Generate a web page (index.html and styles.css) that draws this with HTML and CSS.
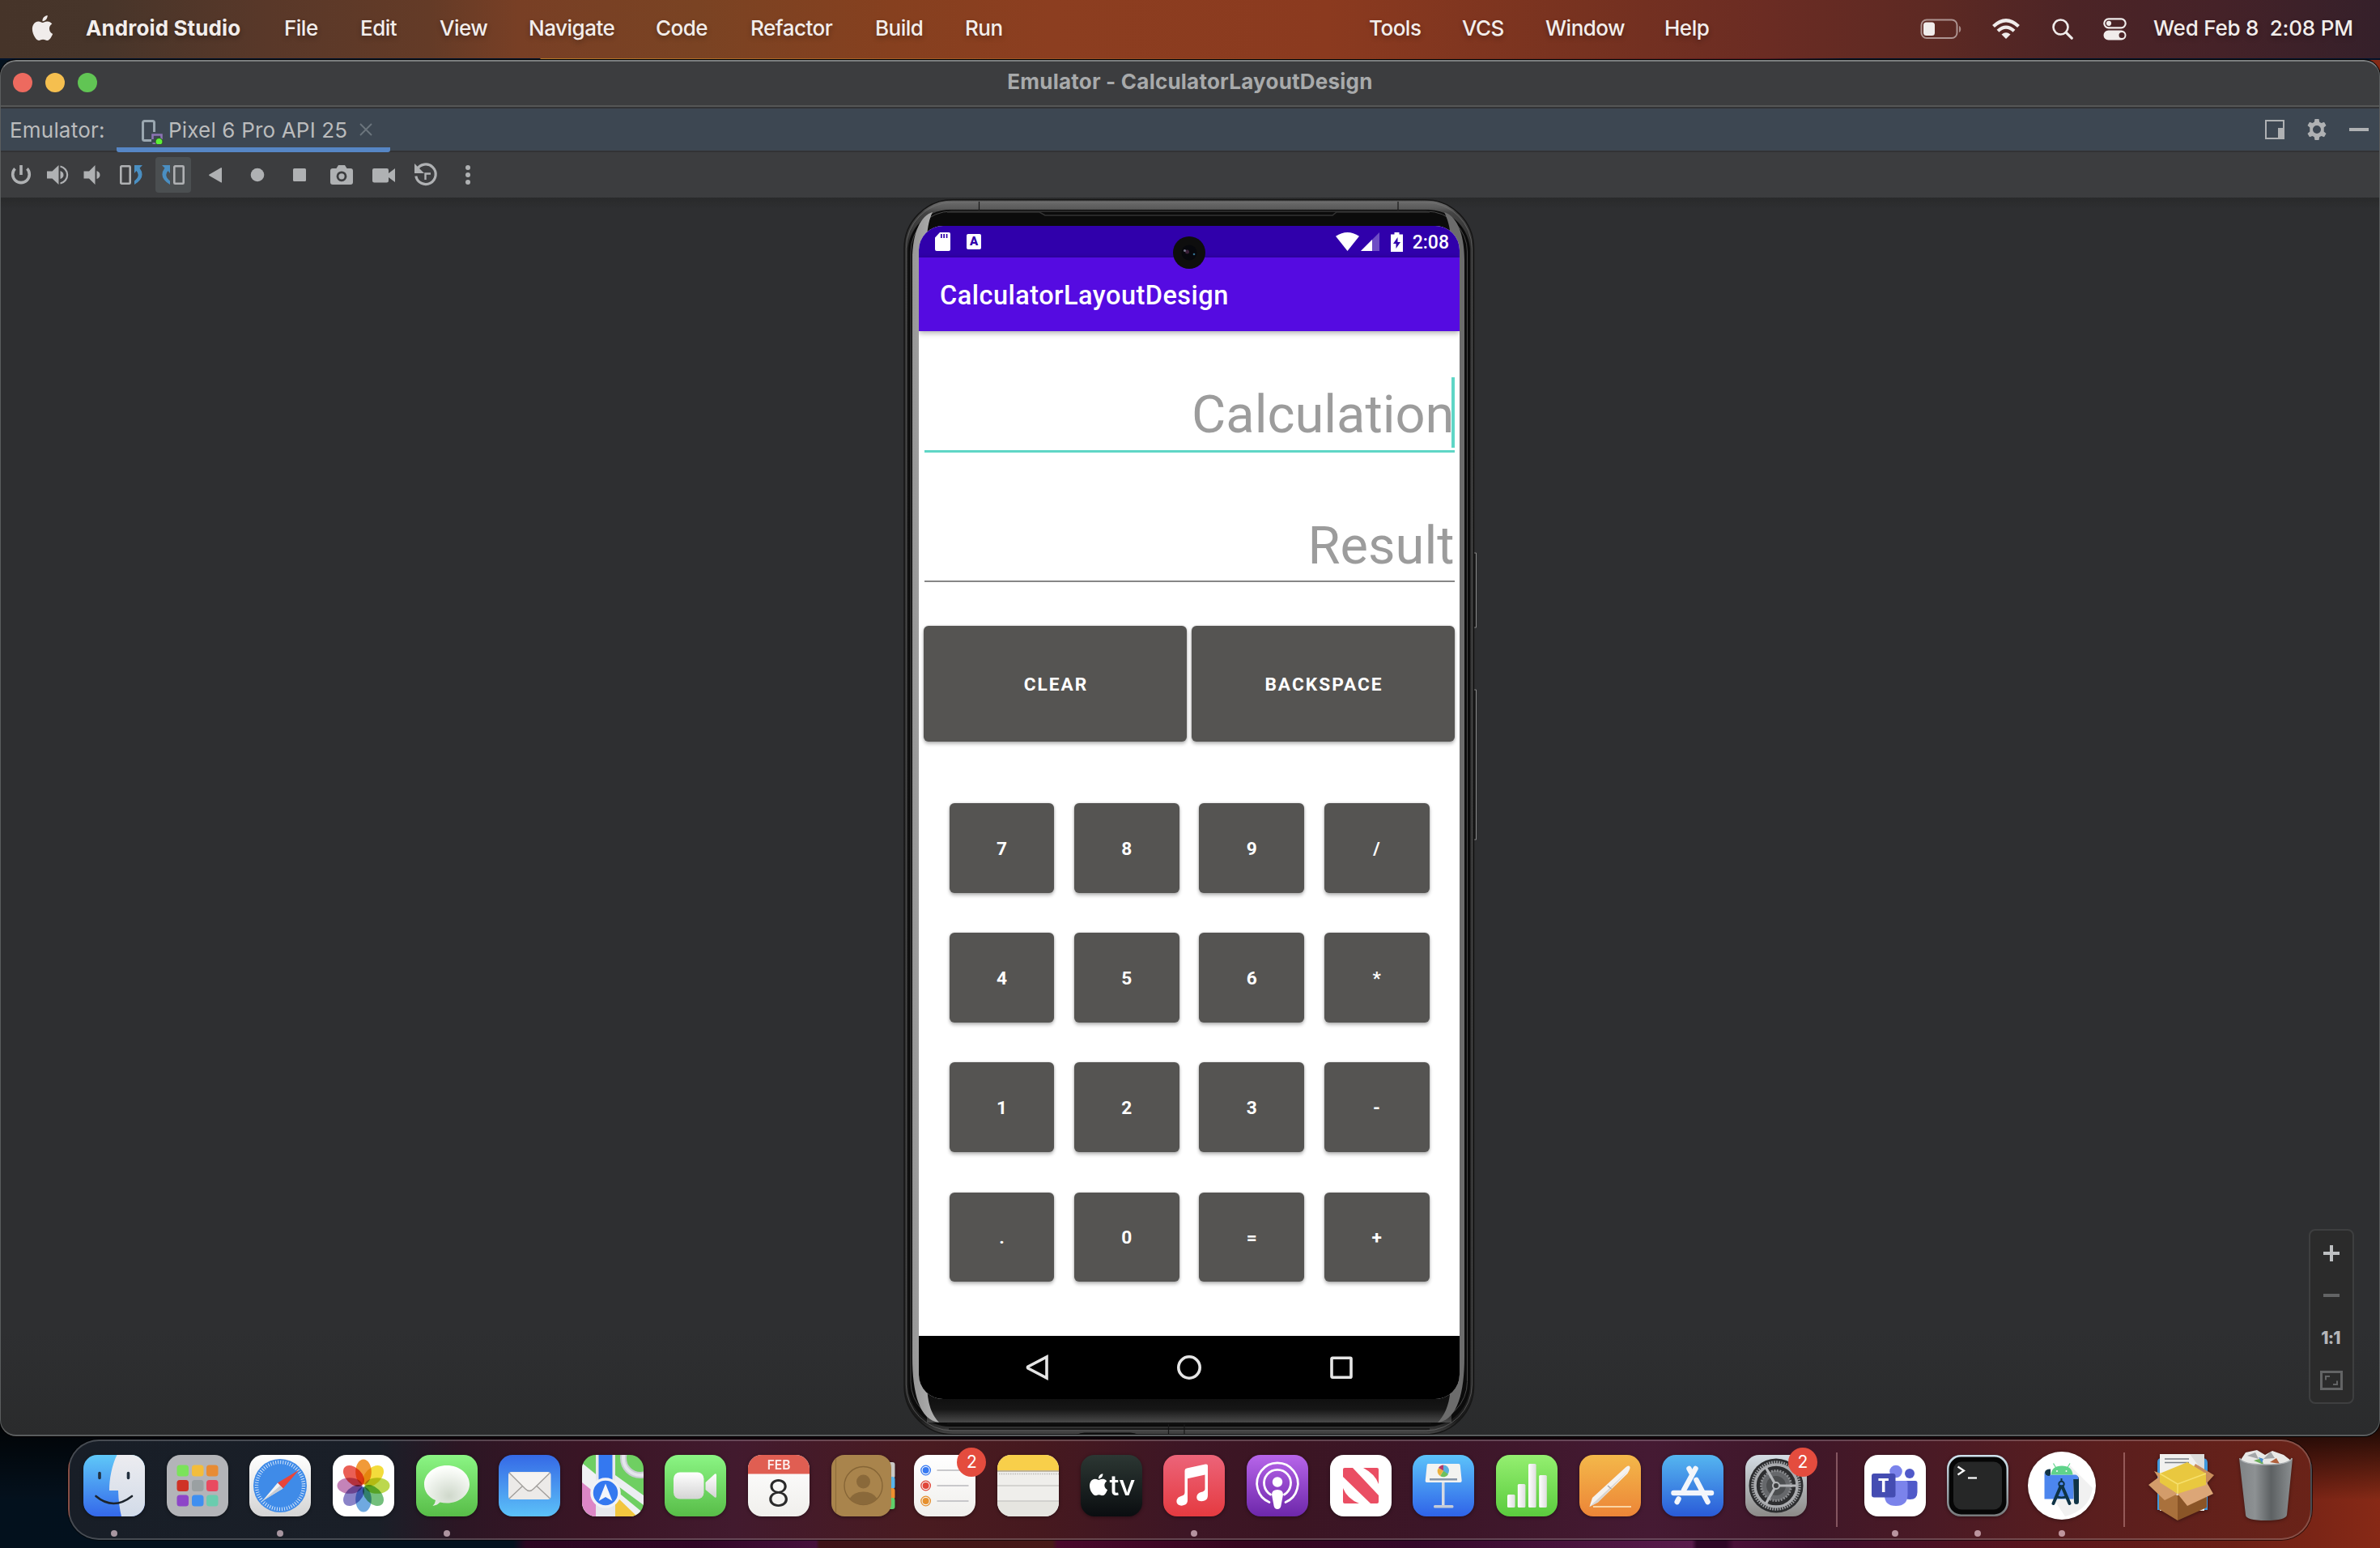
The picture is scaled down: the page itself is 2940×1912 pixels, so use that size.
FILE: index.html
```html
<!DOCTYPE html>
<html lang="en">
<head>
<meta charset="utf-8">
<title>Emulator - CalculatorLayoutDesign</title>
<link rel="stylesheet" href="styles.css">
</head>
<body>
<svg class="defs" width="0" height="0" aria-hidden="true">
  <defs>
    <linearGradient id="gGreen" x2="0" y2="1"><stop offset="0" stop-color="#8bf584"/><stop offset="1" stop-color="#58bd48"/></linearGradient>
    <linearGradient id="gBlue" x2="0" y2="1"><stop offset="0" stop-color="#3569e6"/><stop offset="1" stop-color="#5cc1f8"/></linearGradient>
    <linearGradient id="gBlueDown" x2="0" y2="1"><stop offset="0" stop-color="#5cc3fa"/><stop offset="1" stop-color="#2f63e8"/></linearGradient>
    <linearGradient id="gWhite" x2="0" y2="1"><stop offset="0" stop-color="#ffffff"/><stop offset="1" stop-color="#d4d4d4"/></linearGradient>
    <linearGradient id="gPaper" x2="0" y2="1"><stop offset="0" stop-color="#ffffff"/><stop offset="1" stop-color="#f0efec"/></linearGradient>
    <radialGradient id="gBubble" cx=".55" cy=".75" r=".7"><stop offset="0" stop-color="#cfd8cb"/><stop offset="1" stop-color="#fdfffc"/></radialGradient>
    <linearGradient id="gBar" x2="1"><stop offset="0" stop-color="#fff"/><stop offset="1" stop-color="#dedede"/></linearGradient>
    <clipPath id="tile"><rect width="76" height="76" rx="17"/></clipPath>
    <symbol id="apple" viewBox="0 0 24 24"><path d="M12.152 6.896c-.948 0-2.415-1.078-3.96-1.04-2.04.027-3.91 1.183-4.961 3.014-2.117 3.675-.546 9.103 1.519 12.09 1.013 1.454 2.208 3.09 3.792 3.039 1.52-.065 2.09-.987 3.935-.987 1.831 0 2.35.987 3.96.948 1.637-.026 2.676-1.48 3.676-2.948 1.156-1.688 1.636-3.325 1.662-3.415-.039-.013-3.182-1.221-3.22-4.857-.026-3.04 2.48-4.494 2.597-4.559-1.429-2.09-3.623-2.324-4.39-2.376-2-.156-3.675 1.09-4.61 1.09zM15.53 3.83c.843-1.012 1.4-2.427 1.245-3.83-1.207.052-2.662.805-3.532 1.818-.78.896-1.454 2.338-1.273 3.714 1.338.104 2.715-.688 3.559-1.701"/></symbol>
  </defs>
</svg>

<header class="menubar">
  <svg class="menubar-apple"><use href="#apple"/></svg>
  <strong class="menubar-app">Android Studio</strong>
  <nav class="menubar-menus">
    <span>File</span><span>Edit</span><span>View</span><span>Navigate</span><span>Code</span><span>Refactor</span><span>Build</span><span>Run</span><span>Tools</span><span>VCS</span><span>Window</span><span>Help</span>
  </nav>
  <div class="menubar-status">
    <svg class="s-battery" width="52" height="26" viewBox="0 0 52 26"><rect x="1.5" y="1.5" width="44" height="22.5" rx="6.5" fill="none" stroke="#fff" stroke-opacity=".5" stroke-width="2"/><rect x="4" y="4.500" width="14" height="16.500" rx="3.500"/><path d="M48 9c3 1 3 7 0 8z" fill-opacity=".5"/></svg>
    <svg class="s-wifi" width="34" height="26" viewBox="0 0 34 26"><g fill="none" stroke="#f0eceb" stroke-width="4.200"><path d="M1.500 9.500Q17-5 32.500 9.500"/><path d="M7 15.300Q17 6 27 15.300"/></g><path d="M17 25l-5.500-5.500q5.500-4.500 11 0z"/></svg>
    <svg class="s-search" width="26" height="26" viewBox="0 0 26 26"><g fill="none" stroke="#f0eceb" stroke-width="2.600" stroke-linecap="round"><circle cx="10.500" cy="10.500" r="9"/><path d="M17.200 17.200l7 7" stroke-width="3.200"/></g></svg>
    <svg class="s-control" width="29" height="28" viewBox="0 0 29 28"><rect x="1.300" y="1.300" width="26.400" height="11" rx="5.500" fill="none" stroke="#f0eceb" stroke-width="2.200"/><circle cx="7" cy="6.800" r="3.100"/><path fill-rule="evenodd" d="M6.500 15.500h16a6 6 0 010 12h-16a6 6 0 010-12zm16.500 2.500a3.500 3.500 0 100 7 3.500 3.500 0 000-7z"/></svg>
    <span class="clock">Wed Feb 8&nbsp; 2:08 PM</span>
  </div>
</header>

<main class="window">
  <div class="titlebar">
    <div class="lights"><i class="red"></i><i class="yellow"></i><i class="green"></i></div>
    <h1 class="title">Emulator - CalculatorLayoutDesign</h1>
  </div>
  <div class="tabbar">
    <span class="tabbar-label">Emulator:</span>
    <div class="tab">
      <svg width="28" height="32" viewBox="0 0 28 32"><path d="M12 27.500H3.500a2 2 0 01-2-2v-20a2 2 0 012-2h10a2 2 0 012 2V17" fill="none" stroke="#9aa7b0" stroke-width="3"/><path d="M13.500 26v-5.500h11V26M13.500 31.500h5" fill="none" stroke="#8c74b4" stroke-width="2.600"/><circle cx="21.500" cy="29" r="4.500" fill="#5df137" stroke="#32452f" stroke-width="1"/></svg>
      <span class="tab-name">Pixel 6 Pro API 25</span>
      <svg class="tab-close" width="16" height="16" viewBox="0 0 16 16"><path d="M1 1l14 14M15 1L1 15" stroke="#6c757d" stroke-width="1.800"/></svg>
    </div>
    <div class="tabbar-actions">
      <svg width="24" height="24" viewBox="0 0 24 24"><path d="M0 0h24v24H0zM2 2v20h14V10h6V2z" fill-rule="evenodd"/></svg>
      <svg width="26" height="26" viewBox="0 0 26 26"><path d="M10.500 0h5l.7 3.700 2.300 1.300 3.500-1.300 2.500 4.400-2.800 2.500v4.800l2.800 2.500-2.500 4.400-3.500-1.300-2.300 1.300-.7 3.700h-5l-.7-3.700L7.500 21 4 22.300l-2.500-4.400 2.800-2.500v-4.800L1.500 8.100 4 3.700 7.500 5l2.300-1.300zM13 8a5 5 0 100 10 5 5 0 000-10z" fill-rule="evenodd"/></svg>
      <svg width="24" height="24" viewBox="0 0 24 24"><path d="M0 10h24v4H0z"/></svg>
    </div>
  </div>
  <div class="toolbar">
    <span class="tool power"><svg viewBox="0 0 32 32"><path d="M16 4v12" stroke="#afb1b3" stroke-width="3.600"/><path d="M8.500 8.300a10.300 10.300 0 1015 0" fill="none" stroke="#afb1b3" stroke-width="3.600"/></svg></span>
    <span class="tool vol-up"><svg viewBox="0 0 32 32"><path d="M3 11.500h6.500L17.500 4v24L9.500 20.500H3z"/><path d="M19.500 11q4 1.500 4 5t-4 5z"/><path d="M19.500 5.500a10.700 10.700 0 010 21" fill="none" stroke="#afb1b3" stroke-width="2.200"/></svg></span>
    <span class="tool vol-down"><svg viewBox="0 0 32 32"><path d="M6.500 11.500H13L20.500 4v24L13 20.500H6.500z"/><path d="M22.500 11q4 1.500 4 5t-4 5z"/></svg></span>
    <span class="tool"><svg viewBox="0 0 32 32"><rect x="3.300" y="5.300" width="11.400" height="21.400" rx="1" fill="none" stroke="#afb1b3" stroke-width="2.600"/><path d="M20 4h10l-3.500 3.500Q35 19 20 28v-4.500Q28 17 22.500 11L20 14z" fill="#4a8fc2"/></svg></span>
    <span class="tool"><b class="tool-active"><svg viewBox="0 0 32 32"><rect x="17.300" y="5.300" width="11.400" height="21.400" rx="1" fill="none" stroke="#afb1b3" stroke-width="2.600"/><path d="M12 4H2l3.500 3.500Q-3 19 12 28v-4.500Q4 17 9.500 11L12 14z" fill="#4a8fc2"/></svg></b></span>
    <span class="tool"><svg viewBox="0 0 32 32"><path d="M24 8v17q0 1-1.200.3L8.500 17q-1-.7 0-1.400L22.800 7.200Q24 6.800 24 8z"/></svg></span>
    <span class="tool"><svg viewBox="0 0 32 32"><circle cx="16" cy="16" r="8.300"/></svg></span>
    <span class="tool"><svg viewBox="0 0 32 32"><rect x="8" y="8" width="16" height="16" rx="1.500"/></svg></span>
    <span class="tool"><svg viewBox="0 0 32 32"><path d="M12 4h8l2.500 4H27q3 0 3 3v14q0 3-3 3H5q-3 0-3-3V11q0-3 3-3h4.500z"/><circle cx="16" cy="17.800" r="5" fill="none" stroke="#3c3d3f" stroke-width="2.800"/></svg></span>
    <span class="tool"><svg viewBox="0 0 32 32"><path d="M4 8h16q2 0 2 2v4l8-6v17l-8-6v4q0 2.500-2.500 2.500h-15Q2 25.500 2 23V10q0-2 2-2z"/></svg></span>
    <span class="tool"><svg viewBox="0 0 32 32"><path d="M5 9.500a12.300 12.300 0 11-1.200 8" fill="none" stroke="#afb1b3" stroke-width="3.200"/><path d="M2 2v12h12z"/><path d="M15.500 22v-7.500H22" fill="none" stroke="#afb1b3" stroke-width="2.400"/></svg></span>
    <span class="tool"><svg viewBox="0 0 32 32"><circle cx="16" cy="7" r="3"/><circle cx="16" cy="16" r="3"/><circle cx="16" cy="25" r="3"/></svg></span>
  </div>

  <section class="stage">
    <div class="phone">
      <svg class="phone-frame" width="718" height="1528" viewBox="0 0 718 1528">
        <defs>
          <linearGradient id="fTop" gradientUnits="userSpaceOnUse" x1="0" y1="0" x2="0" y2="1526"><stop offset="0" stop-color="#2c2c2c"/><stop offset=".002" stop-color="#6a6a6a"/><stop offset=".007" stop-color="#5c5c5c"/><stop offset=".011" stop-color="#444"/><stop offset=".04" stop-color="#2b2b2b"/><stop offset=".96" stop-color="#242424"/><stop offset=".988" stop-color="#1a1a1a"/><stop offset=".994" stop-color="#303030"/><stop offset="1" stop-color="#484848"/></linearGradient>
          <linearGradient id="fSilver"><stop offset="0" stop-color="#969696"/><stop offset="1" stop-color="#b4b4b4"/></linearGradient>
          <linearGradient id="fBottom" x2="0" y2="1"><stop offset="0" stop-color="#0c0c0c"/><stop offset=".6" stop-color="#161616"/><stop offset="1" stop-color="#4a4a4a"/></linearGradient>
        </defs>
        <path d="M710 437h3.500v92H710zM710 606h3.500v185H710z" fill="#1a1a1a" stroke="#8a8a8a" stroke-width="1"/>
        <rect x="7" y=".8" width="703.500" height="1525" rx="60" fill="url(#fTop)" stroke="#161616" stroke-width="1.500"/>
        <rect x="9.300" y="4" width="699" height="1517" rx="57" fill="none" stroke="#777" stroke-width="1" stroke-opacity=".6"/>
        <rect x="11.500" y="13" width="694.500" height="1503" rx="52" fill="#0b0b0b"/>
        <rect x="15" y="15" width="687.500" height="1495.500" rx="50" fill="none" stroke="#484848" stroke-width="1"/>
        <rect x="35" y="1470" width="648" height="41" fill="url(#fBottom)"/>
        <path d="M42 16C28 20 17 40 17 75V1430C17 1475 26 1508 50 1511C42 1502 35 1490 35 1460V46C36 34 38 24 42 16Z" fill="url(#fSilver)"/>
        <path d="M674 16C688 20 699 40 699 75V1430C699 1475 690 1508 666 1511C674 1502 682 1490 682 1460V46C681 34 678 24 674 16Z" fill="#6c6c6c"/>
        <path d="M60 16h114l7 4h355l5-4h115" fill="none" stroke="#333" stroke-width="1.500"/>
        <path d="M99.500 3v11M617 3v11M333.500 1512v13M353 1512v13" stroke="#191919" stroke-width="1.200"/>
        <path d="M60 1512.500h598M62 1519h594" stroke="#121212" stroke-width="1.500"/>
        <path d="M220 1526q4-2.500 10-2.500h56q6 0 10 2.500z" fill="#0f0f0f"/>
      </svg>
      <div class="screen">
        <div class="android-status">
          <svg class="a-sd" width="19" height="23" viewBox="0 0 19 23"><path fill-rule="evenodd" d="M6 0h11q2 0 2 2v19q0 2-2 2H2q-2 0-2-2V6.500zM7 2v5h1.700V2zm3.300 0v5H12V2zm3.400 0v5h1.700V2z"/></svg>
          <span class="a-key">A</span>
          <svg class="a-wifi" width="29" height="23" viewBox="0 0 29 23"><path d="M0 4.800Q14.500-4.800 29 4.800L14.500 23z"/></svg>
          <svg class="a-signal" width="23" height="23" viewBox="0 0 23 23"><path d="M0 23L23 0v23z" fill-opacity=".3"/><path d="M0 23L14 9v14z"/></svg>
          <svg class="a-battery" width="15" height="24" viewBox="0 0 15 24"><path fill-rule="evenodd" d="M4.500 0h6v2.500H15V24H0V2.500h4.500zM8.500 6L3 14h3.500v6L12 12H8.500z"/></svg>
          <time>2:08</time>
        </div>
        <div class="appbar">CalculatorLayoutDesign</div>
        <div class="calc">
          <div class="field field-focus">Calculation<i class="caret"></i></div>
          <div class="field field-result">Result</div>
          <div class="actions"><button>CLEAR</button><button>BACKSPACE</button></div>
          <div class="keys">
            <button>7</button><button>8</button><button>9</button><button>/</button>
            <button>4</button><button>5</button><button>6</button><button>*</button>
            <button>1</button><button>2</button><button>3</button><button>-</button>
            <button>.</button><button>0</button><button>=</button><button>+</button>
          </div>
        </div>
        <div class="navbar">
          <svg width="32" height="32" viewBox="0 0 32 32"><path d="M28 3v26L5 17q-1.200-1 0-2z"/></svg>
          <svg width="32" height="32" viewBox="0 0 32 32"><circle cx="16" cy="16" r="13.200"/></svg>
          <svg width="32" height="32" viewBox="0 0 32 32"><rect x="4" y="4.200" width="24" height="24" rx="1"/></svg>
        </div>
        <svg class="lens" width="42" height="42" viewBox="0 0 42 42"><circle cx="21" cy="21" r="20" fill="#0e0e0e"/><circle cx="21" cy="21" r="9.500" fill="#07080d"/><circle cx="18.500" cy="20" r="2.500" fill="#3a2038"/><circle cx="15.500" cy="18.500" r="1.500" fill="#77778c"/><circle cx="27" cy="23" r="1.300" fill="#34708f"/></svg>
      </div>
    </div>
    <div class="zoom">
      <svg width="28" height="24" viewBox="0 0 28 24"><path d="M4 10h8V2h4v8h8v4h-8v8h-4v-8H4z" fill="#bdbfc1"/></svg>
      <svg width="28" height="24" viewBox="0 0 28 24"><path d="M4 10h20v4H4z" fill="#636465"/></svg>
      <span>1:1</span>
      <svg width="28" height="24" viewBox="0 0 28 24"><g fill="none" stroke="#636465"><rect x="1.500" y="1.500" width="25" height="21" stroke-width="3"/><path d="M7 11.500V7h5M21 12.500V17h-5" stroke-width="2"/></g></svg>
    </div>
  </section>
</main>

<footer class="dock-area">
  <div class="dock">
    <div class="app run"><svg viewBox="0 0 76 76"><g clip-path="url(#tile)"><rect width="76" height="76" fill="url(#fin)"/><path d="M41.500 0C35 13 32 30 32 44H43Q43.500 62 47 76H76V0Z" fill="url(#finw)"/></g><path d="M20 22.500v6M55.500 22.500v6" stroke="#22303f" stroke-width="3.600" stroke-linecap="round"/><path d="M15.500 51Q37 69 60 51" fill="none" stroke="#1c242c" stroke-width="2.600" stroke-linecap="round"/><defs><linearGradient id="fin" x2="0" y2="1"><stop offset="0" stop-color="#5fc8f8"/><stop offset="1" stop-color="#3468ea"/></linearGradient><linearGradient id="finw" x2="0" y2="1"><stop offset="0" stop-color="#ececf0"/><stop offset="1" stop-color="#d2dbe8"/></linearGradient></defs></svg></div>
    <div class="app"><svg viewBox="0 0 76 76"><rect width="76" height="76" rx="17" fill="#b3b4b8"/><g><rect x="12.500" y="12.500" width="14.500" height="14" rx="3.500" fill="#7be35a"/><rect x="31" y="12.500" width="14.500" height="14" rx="3.500" fill="#f3bd3c"/><rect x="49" y="12.500" width="14.500" height="14" rx="3.500" fill="#e88b33"/><rect x="12.500" y="31" width="14.500" height="14" rx="3.500" fill="#cf3226"/><rect x="31" y="31" width="14.500" height="14" rx="3.500" fill="#9aa0a2"/><rect x="49" y="31" width="14.500" height="14" rx="3.500" fill="#e94a60"/><rect x="12.500" y="49.500" width="14.500" height="14" rx="3.500" fill="#8d45c8"/><rect x="31" y="49.500" width="14.500" height="14" rx="3.500" fill="#3f8ff0"/><rect x="49" y="49.500" width="14.500" height="14" rx="3.500" fill="#6accae"/></g></svg></div>
    <div class="app run"><svg viewBox="0 0 76 76"><rect width="76" height="76" rx="17" fill="url(#gWhite)"/><circle cx="38" cy="38" r="33" fill="#3f8be8"/><circle cx="38" cy="38" r="29" fill="none" stroke="#d6e6fa" stroke-width="4.500" stroke-dasharray="1 2.037"/><path d="M61.500 18.500L35 34.500l6.500 7z" fill="#e8453a"/><path d="M16 57L35 34.500l6.500 7z" fill="#f2f2f2"/><path d="M16 57L38.200 38l3.300 3.500z" fill="#c8ccd4"/></svg></div>
    <div class="app"><svg viewBox="0 0 76 76"><rect width="76" height="76" rx="17" fill="#fff"/><g class="petals"><ellipse cx="38" cy="21" rx="9.800" ry="15.500" fill="#f19a38"/><ellipse cx="38" cy="21" rx="9.800" ry="15.500" fill="#f3dc3c" transform="rotate(45 38 38)"/><ellipse cx="38" cy="21" rx="9.800" ry="15.500" fill="#bcd84e" transform="rotate(90 38 38)"/><ellipse cx="38" cy="21" rx="9.800" ry="15.500" fill="#73bf7c" transform="rotate(135 38 38)"/><ellipse cx="38" cy="21" rx="9.800" ry="15.500" fill="#6fa9e0" transform="rotate(180 38 38)"/><ellipse cx="38" cy="21" rx="9.800" ry="15.500" fill="#8a83c8" transform="rotate(225 38 38)"/><ellipse cx="38" cy="21" rx="9.800" ry="15.500" fill="#c483b8" transform="rotate(270 38 38)"/><ellipse cx="38" cy="21" rx="9.800" ry="15.500" fill="#ea5f55" transform="rotate(315 38 38)"/></g></svg></div>
    <div class="app run"><svg viewBox="0 0 76 76"><rect width="76" height="76" rx="17" fill="url(#gGreen)"/><path d="M38 13c15.500 0 28 10.300 28 23.200S53.500 59.500 38 59.500q-4.500 0-8.500-1-3 3.500-9 4.500 3.300-3 3.500-7C15 52 10 45 10 36.200 10 23.300 22.500 13 38 13z" fill="url(#gBubble)"/></svg></div>
    <div class="app"><svg viewBox="0 0 76 76"><rect width="76" height="76" rx="17" fill="url(#gBlue)"/><rect x="12" y="21" width="52.500" height="34" rx="4" fill="#eceae8"/><path d="M13 54l17-16M63.500 54l-17-16" stroke="#a09d9a" stroke-width="1.300"/><path d="M13 22l20 20q5 5 10 0l20.500-20" fill="#f5f3f1" stroke="#a09d9a" stroke-width="1.300"/></svg></div>
    <div class="app"><svg viewBox="0 0 76 76"><g clip-path="url(#tile)"><rect width="76" height="76" fill="#6fcf62"/><path d="M0 10L76 72V76H0z" fill="#f0f1f4"/><path d="M0 34L20 50V76H0z" fill="#dc87c6"/><path d="M41 76V50L68 76z" fill="#f2c63f"/><path d="M41 25L76 50V62L41 36z" fill="#eceef2"/><path d="M17 0h24v76H17z" fill="#e6e8ec"/><path d="M20.500 0h17v40h-17z" fill="#3478f0"/><circle cx="72" cy="4" r="21" fill="none" stroke="#c9ccd3" stroke-width="8"/><circle cx="72" cy="4" r="21" fill="none" stroke="#e4e6ec" stroke-width="4"/></g><circle cx="29" cy="47" r="17" fill="#3478f0" stroke="#f1f2f6" stroke-width="3.600"/><path d="M29 35.500l8.500 21.500L29 52l-8.500 5z" fill="#f4f6fb"/></svg></div>
    <div class="app"><svg viewBox="0 0 76 76"><rect width="76" height="76" rx="17" fill="url(#gGreen)"/><rect x="11" y="21.500" width="37.500" height="33" rx="8" fill="url(#gWhite)"/><path d="M50.500 34L62 23.500q2-1 2 1.500v26q0 2.500-2 1.500L50.500 43z" fill="url(#gWhite)"/></svg></div>
    <div class="app"><svg viewBox="0 0 76 76"><g clip-path="url(#tile)"><rect width="76" height="76" fill="url(#gPaper)"/><rect width="76" height="23.500" fill="#e05e52"/></g><text x="38" y="18.200" class="cal-month">FEB</text><text x="37.500" y="64" class="cal-day">8</text></svg></div>
    <div class="app"><svg viewBox="0 0 76 76"><rect x="60" y="9" width="18.500" height="20" rx="3" fill="#c9c9c6"/><rect x="60" y="27" width="18.500" height="15" rx="3" fill="#58b4ec"/><rect x="60" y="41" width="18.500" height="14" rx="3" fill="#ef8f2e"/><rect x="60" y="53" width="18.500" height="14" rx="3" fill="#5fcf6a"/><rect width="74" height="76" rx="16" fill="#a9844c"/><path d="M5.500 4v68" stroke="#8f6d3c" stroke-width="1.200"/><circle cx="39.500" cy="38" r="23.500" fill="none" stroke="#866536" stroke-width="1.400"/><circle cx="39.500" cy="33" r="8.500" fill="#8a693a"/><path d="M22.500 54q5-8.500 17-8.500t17 8.500q-6 7.500-17 7.500t-17-7.500z" fill="#8a693a"/></svg></div>
    <div class="app"><svg viewBox="0 0 76 76"><rect width="76" height="76" rx="17" fill="url(#gPaper)"/><path d="M28.500 19h39M28.500 38h39M28.500 57h39" stroke="#b9b9bd" stroke-width="1.700"/><g fill="none" stroke-width="1.300"><circle cx="14.600" cy="19" r="5.800" stroke="#3679f2"/><circle cx="14.600" cy="38" r="5.800" stroke="#e04639"/><circle cx="14.600" cy="57" r="5.800" stroke="#e6902e"/></g><circle cx="14.600" cy="19" r="4" fill="#3679f2"/><circle cx="14.600" cy="38" r="4" fill="#e04639"/><circle cx="14.600" cy="57" r="4" fill="#e6902e"/></svg><b class="badge">2</b></div>
    <div class="app"><svg viewBox="0 0 76 76"><g clip-path="url(#tile)"><rect width="76" height="76" fill="#efeeeb"/><rect y="57" width="76" height="19" fill="#e6e5e0"/><rect width="76" height="19.500" fill="#f8cf4a"/><path d="M0 20h76" stroke="#b0a58a" stroke-width="1.500"/><path d="M0 38h76M0 57h76" stroke="#cbcac8" stroke-width="1.400"/><path d="M2 23.500h74" stroke="#b9b8b5" stroke-width="1.400" stroke-dasharray="1.400 1.400"/></g></svg></div>
    <div class="app"><svg viewBox="0 0 76 76"><rect width="76" height="76" rx="17" fill="url(#tv)"/><use href="#apple" x="8.500" y="23" width="27" height="27.500" fill="#fff"/><text x="35.500" y="50" class="tv-text">tv</text><defs><linearGradient id="tv" x2="0" y2="1"><stop offset="0" stop-color="#2c3733"/><stop offset="1" stop-color="#0a0d10"/></linearGradient></defs></svg></div>
    <div class="app run"><svg viewBox="0 0 76 76"><rect width="76" height="76" rx="17" fill="url(#mus)"/><path d="M26.500 19.500q0-2.500 2.500-3L52 11.600q3-.6 3 2V50q0 5-4 6.500-4 1.500-7.500 0-3-2-2-6 1-3.500 5-4.500 5-1 5-4V24.500L30 29.300V56q0 5-4.500 6-4 1.500-7-.5-3-2.500-1.700-6.500 1.200-3 5-4 4.700-1 4.700-4.500z" fill="#fff"/><defs><linearGradient id="mus" x2="0" y2="1"><stop offset="0" stop-color="#ec6479"/><stop offset="1" stop-color="#e53a40"/></linearGradient></defs></svg></div>
    <div class="app"><svg viewBox="0 0 76 76"><rect width="76" height="76" rx="17" fill="url(#pod)"/><g fill="none" stroke="#fff" stroke-width="2.800" stroke-linecap="round"><path d="M28 58.500a25.300 25.300 0 1120 0"/><path d="M29.500 49a16.500 16.500 0 1117 0"/></g><circle cx="38" cy="33.500" r="6.200" fill="#fff"/><path d="M31 49q0-6 7-6t7 6l-2.600 14q-.9 4-4.400 4t-4.400-4z" fill="#fff"/><defs><linearGradient id="pod" x2="0" y2="1"><stop offset="0" stop-color="#b765ea"/><stop offset="1" stop-color="#6d27aa"/></linearGradient></defs></svg></div>
    <div class="app"><svg viewBox="0 0 76 76"><rect width="76" height="76" rx="17" fill="#fff"/><path d="M18 16H28L60 50V58q0 2-2 2H50L16 27V18q0-2 2-2z" fill="#ea4e63"/><path d="M41 16h17q2 0 2 2v18Q56 24 41 16zM16 41q5 13 20 19H18q-2 0-2-2z" fill="#ea4e63"/></svg></div>
    <div class="app"><svg viewBox="0 0 76 76"><rect width="76" height="76" rx="17" fill="url(#gBlueDown)"/><path d="M36 34h3.500v30H36z" fill="#d5dae2"/><rect x="26" y="62" width="24.500" height="3.500" rx="1.500" fill="#c3cbd8"/><path d="M19 11h38q1.500 0 1.700 1.500l2 19.500q0 2-2 2H17.500q-2 0-1.800-2l2-19.500Q17.800 11 19 11z" fill="#f3f3f1"/><path d="M21 29h34v2.500H21z" fill="#8795a8"/><path d="M38 19.500V12.500a7 7 0 010 14z" fill="#5aaede"/><path d="M38 19.500l6 4.500a7 7 0 01-10 2z" fill="#6fc05c"/><path d="M38 19.500L34 26a7 7 0 01-2-10z" fill="#ecb03c"/><path d="M38 19.500L32 16a7 7 0 016-3.500z" fill="#b33a6a"/></svg></div>
    <div class="app"><svg viewBox="0 0 76 76"><rect width="76" height="76" rx="17" fill="url(#num)"/><g fill="url(#gBar)"><rect x="14" y="49" width="9.600" height="16" rx="1.500"/><rect x="26.800" y="36" width="9.600" height="29" rx="1.500"/><rect x="40" y="11" width="9.600" height="54" rx="1.500"/><rect x="53.200" y="25" width="9.600" height="40" rx="1.500"/></g><defs><linearGradient id="num" x2="0" y2="1"><stop offset="0" stop-color="#94ef70"/><stop offset="1" stop-color="#5bcb3e"/></linearGradient></defs></svg></div>
    <div class="app"><svg viewBox="0 0 76 76"><rect width="76" height="76" rx="17" fill="url(#pag)"/><path d="M17 64h47" stroke="#fad5a4" stroke-width="1.800"/><path d="M57 15.500q4-3.500 5.500-.5.500 2-3 8L23 58.500 12.500 64 16 53z" fill="#f5f2ef"/><path d="M61 19L23 58.500 12.500 64z" fill="#d8d4d0"/><path d="M35 38l4.500 4" stroke="#aaa" stroke-width="1.400"/><defs><linearGradient id="pag" x2="0" y2="1"><stop offset="0" stop-color="#f4b84a"/><stop offset="1" stop-color="#ec8537"/></linearGradient></defs></svg></div>
    <div class="app"><svg viewBox="0 0 76 76"><rect width="76" height="76" rx="17" fill="url(#gAs)"/><g stroke="#f3f6fb" stroke-width="6.500" stroke-linecap="round"><path d="M14.500 47h46.500"/><path d="M41.500 17L27 43.500"/><path d="M33.500 17l3 5.500M42.500 31L56.500 58M20.500 54.500L18.700 58"/></g><defs><linearGradient id="gAs" x2="0" y2="1"><stop offset="0" stop-color="#55b6f0"/><stop offset="1" stop-color="#2a5bd8"/></linearGradient></defs></svg></div>
    <div class="app"><svg viewBox="0 0 76 76"><rect width="76" height="76" rx="17" fill="url(#set)"/><circle cx="38" cy="38" r="33.500" fill="#2c2d2f"/><circle cx="38" cy="38" r="29" fill="none" stroke="#9a9c9f" stroke-width="3.500" stroke-dasharray="1.700 1.336"/><circle cx="38" cy="38" r="26" fill="none" stroke="#a9abae" stroke-width="3.500"/><circle cx="38" cy="38" r="18.500" fill="#66686b" stroke="#8a8c8f" stroke-width="3" stroke-dasharray="2 1.500"/><circle cx="38" cy="38" r="12" fill="#4c4e50"/><path d="M38 38h25M38 38L25.500 16M38 38L25.500 60" stroke="#b4b6b9" stroke-width="3.200"/><circle cx="38" cy="38" r="4" fill="#3c3d3f" stroke="#b4b6b9" stroke-width="2"/><defs><linearGradient id="set" x2="0" y2="1"><stop offset="0" stop-color="#d4dde4"/><stop offset="1" stop-color="#8c8a88"/></linearGradient></defs></svg><b class="badge">2</b></div>
    <i class="divider"></i>
    <div class="app run"><svg viewBox="0 0 76 76"><rect width="76" height="76" rx="17" fill="#fff"/><circle cx="56" cy="23" r="6" fill="#5059c9"/><path d="M48 32h15q2.500 0 2.500 2.500V46q0 9-9 9-6 0-8.500-4z" fill="#5059c9"/><circle cx="39" cy="20.500" r="7.800" fill="#7b83eb"/><path d="M28 32h23q2.500 0 2.500 2.500V49q0 14-14.500 14T25 49V34z" fill="#7b83eb"/><rect x="9" y="23" width="29.500" height="29.500" rx="3" fill="#444cb2"/><text x="23.700" y="45.500" class="teams-text">T</text></svg></div>
    <div class="app run"><svg viewBox="0 0 76 76"><rect width="76" height="76" rx="17" fill="url(#ter)"/><rect x="2.500" y="2.500" width="71" height="71" rx="15" fill="#060606"/><rect x="8" y="8.500" width="60" height="59" rx="10" fill="#262727"/><path d="M13.500 14.500l7.500 5-7.500 5" fill="none" stroke="#fff" stroke-width="2.200"/><path d="M26 28.500h11" stroke="#fff" stroke-width="2.200"/><defs><linearGradient id="ter" x2="0" y2="1"><stop offset="0" stop-color="#cfe3ee"/><stop offset="1" stop-color="#77797b"/></linearGradient></defs></svg></div>
    <div class="app run studio"><svg viewBox="0 0 84 84"><circle cx="42" cy="42" r="42" fill="#fff"/><path d="M52 17L80 45Q76 72 46 80L34 62z" fill="#f1f1f1"/><path d="M28 21.500q-7 0-7 4.500t7 4.500z" fill="#0f3346"/><path d="M20.500 25v33.500h36V30H27q-6 0-6.500-5z" fill="#4c86ee"/><path d="M56 30q7-1 7 4v28q0 3-3 3t-3-3z" fill="#0f3346"/><path d="M27 28.500h31q4.500 0 4.500 5.500H56v-1.500H27z" fill="#4c86ee"/><path d="M28.500 28.500q1-11 13.500-11t13.500 11z" fill="#5fd38a"/><path d="M34.500 19.500l-3-5M49 19.500l3-5" stroke="#5fd38a" stroke-width="1.200"/><circle cx="36" cy="24" r="1" fill="#fff"/><circle cx="47.500" cy="24" r="1" fill="#fff"/><g fill="none" stroke="#0f3346"><circle cx="41.500" cy="40" r="3.200" stroke-width="2"/><path d="M41.500 33v4" stroke-width="2"/><path d="M40.500 43L31.500 64M42.500 43L51.500 64" stroke-width="4" stroke-linecap="round"/><path d="M35 55.500q6.500 2.500 13 0" stroke-width="2.500"/></g></svg></div>
    <i class="divider second"></i>
    <div class="app box"><svg viewBox="0 0 82 84"><path d="M11 12q0-5 5-5h51q6 0 6 6v58H11z" fill="#3f98dc"/><path d="M14 2h45l10 10v60H14z" fill="#f1f1ef"/><path d="M20 8h30M20 12.500h30" stroke="#7a8088" stroke-width="1.600"/><path d="M51 2h18v24z" fill="#dcdcda"/><path d="M13 45l23 8v31L13 70z" fill="#a9713c"/><path d="M36 53l36-16v31L36 84z" fill="#8a5527"/><path d="M7 23l8 3v10l21 15L20 59 0 40l12-9z" fill="#d39c6a"/><path d="M58 14l23 14-9 10-36 14z" fill="#c98e5c"/><path d="M36 51l36-14 8 14-32 15z" fill="#dca677"/><path d="M14 26l34-14 23 14v14L36 51 14 37z" fill="#e9c83f"/><path d="M14 26l22 13v12M36 39l35-13" fill="none" stroke="#f6e06d" stroke-width="1.500"/></svg></div>
    <div class="app trash"><svg viewBox="0 0 66 88"><path d="M2 13L8 4l14-3 10 6 9-5 14 5 9 7-12 9H14z" fill="#e9e9e7"/><path d="M10 8l10-4 4 8zM30 12l9-9 5 8z" fill="#a4a6a8"/><path d="M18 14l10-3 2 8z" fill="#6cae5a"/><path d="M38 16l8-5 4 7z" fill="#b0603c"/><path d="M24 10l6 2-2 5z" fill="#4a8ad0"/><path d="M0 11q4 8 33 8t33-8l-7 70q-1 7-26 7T8 81z" fill="url(#tra)"/><path d="M.7 11q3 8 32.300 8t32.300-8" fill="none" stroke="#a9adb0" stroke-width="1.500"/><defs><linearGradient id="tra"><stop offset="0" stop-color="#808486"/><stop offset=".3" stop-color="#8d9193"/><stop offset=".6" stop-color="#5d6163"/><stop offset="1" stop-color="#8b8f91"/></linearGradient></defs></svg></div>
  </div>
</footer>
</body>
</html>
```
FILE: styles.css
```css
* { box-sizing: border-box; }

body {
  margin: 0;
  width: 2940px;
  height: 1912px;
  overflow: hidden;
  display: flex;
  flex-direction: column;
  font-family: Inter, "Liberation Sans", sans-serif;
  font-size: 26px;
  background:
    linear-gradient(90deg, #03132b 667px, #b5782a 668px, #a85f25 1100px, #8c3a1c 1700px, #5a1a20 2180px, #03132b 2280px) 0 0 / 100% 74px no-repeat,
    linear-gradient(90deg, #03111d 0, #03111f 634px, #2b0521 650px, #300626 860px, #45103c 1008px, #3d1218 1012px, #471a18 1300px, #49082c 1306px, #35061f 1540px, #33082a 1750px, #591c4c 2090px, #2d0626 2096px, #2d0626 2132px, #4a1038 2142px, #3c0c2c 2250px, #59151c 2520px, #6b2016 2760px, #872916 2940px) 0 100% / 100% 60px no-repeat,
    linear-gradient(180deg, rgba(0, 0, 0, .8), transparent) 0 1760px / 100% 92px no-repeat,
    linear-gradient(90deg, #04111d 84px, #2d081e 600px, #3a0c20 2300px, #7a2415 2856px, #852a16 2940px);
}

svg { display: block; flex: none; }
.defs { position: absolute; }

/* ---------- macOS menu bar ---------- */
.menubar {
  flex: none;
  height: 72px;
  display: flex;
  align-items: center;
  color: #f3eeec;
  fill: #f0eceb;
  white-space: nowrap;
  text-shadow: 0 3px 6px rgba(0, 0, 0, .3);
  background: linear-gradient(90deg, #463429 0, #47352a 120px, #593829 330px, #643b27 530px, #783f25 640px, #7a4323 860px, #86401f 1100px, #8c3e20 1300px, #8b3a1f 1640px, #773220 1960px, #6b2c23 2180px, #5c2923 2400px, #4c2426 2560px, #452228 2740px, #35202a 2940px);
}
.menubar-apple { width: 31px; height: 31px; margin-left: 37px; margin-top: -4px; }
.menubar-app { width: 245px; margin-left: 38px; font-weight: 700; letter-spacing: .12px; margin-top: -3px; }
.menubar-menus {
  width: 2021px;
  display: grid;
  grid-template-columns: 94px 98px 110px 157px 117px 154px 111px 499px 115px 103px 147px 1fr;
  letter-spacing: -.5px;
  margin-top: -3px;
}
.menubar-menus span { font-weight: 500; }
.menubar-status { display: flex; align-items: center; font-weight: 500; margin-top: -1px; }
.s-wifi { margin-left: 37px; }
.s-search { margin-left: 40px; }
.s-control { margin-left: 37px; }
.clock { margin-left: 33px; letter-spacing: -.2px; margin-top: -2px; }

/* ---------- emulator window ---------- */
.window {
  position: relative;
  flex: none;
  height: 1700px;
  margin-top: 2px;
  padding-top: 2px;
  display: flex;
  flex-direction: column;
  border-radius: 20px;
  overflow: hidden;
  background: #2e2f31;
  box-shadow: 0 0 0 1px #000;
}
.window::after {
  content: "";
  position: absolute;
  inset: 0;
  border: 2px solid #5a5d5e;
  border-top-color: #7b7e7f;
  border-left-width: 1px;
  border-right-width: 1px;
  border-radius: 20px;
}
.titlebar {
  flex: none;
  height: 58px;
  display: grid;
  grid-template-columns: 1fr auto 1fr;
  align-items: center;
  padding-bottom: 4px;
  background: linear-gradient(#3c3d3f 54px, #555656 54px, #555656 56px, #323335 56px);
}
.lights { display: flex; gap: 16px; padding-left: 16px; }
.lights i { width: 24px; height: 24px; border-radius: 50%; margin-top: -2px; }
.red { background: #ed6a5f; }
.yellow { background: #f5bf4f; }
.green { background: #61c554; }
.title { margin: -5px 0 0; font-size: 26px; font-weight: 700; color: #a8aaab; letter-spacing: .22px; }

.tabbar {
  flex: none;
  height: 54px;
  display: flex;
  align-items: center;
  background: #3d4752;
  border-bottom: 2px solid #323335;
  color: #bbbcbd;
  fill: #afb1b3;
}
.tabbar-label { width: 132px; margin-left: 12px; letter-spacing: .2px; }
.tab {
  width: 338px;
  height: 54px;
  margin-bottom: -2px;
  padding: 0 22px 2px 31px;
  display: flex;
  align-items: center;
  background: linear-gradient(#5686c5, #5686c5) 0 100% / 100% 6px no-repeat;
  border-radius: 3px;
}
.tab svg:first-child { margin-top: 3px; }
.tab-name { margin-left: 5px; white-space: nowrap; letter-spacing: .18px; }
.tab-close { margin-left: auto; }
.tabbar-actions { margin-left: auto; margin-right: 14px; display: flex; align-items: center; gap: 27px; }

.toolbar { flex: none; height: 56px; display: flex; align-items: center; background: #3c3d3f; fill: #afb1b3; }
.tool { width: 52px; display: flex; justify-content: center; }
.tool svg { width: 32px; height: 32px; }
.vol-up { width: 38px; }
.vol-down { width: 46px; }
.tool-active { display: flex; width: 44px; height: 44px; padding: 6px; margin: -6px; border-radius: 4px; background: #4b4f51; }

.stage {
  position: relative;
  flex: 1;
  display: flex;
  justify-content: center;
  padding: 2px 2px 0 0;
  background: linear-gradient(#292a2b, #2e2f31 14px, #2e2f31 1400px, #2a2b2c);
}

/* ---------- phone ---------- */
.phone { display: grid; width: 718px; height: 1528px; font-family: Roboto, sans-serif; }
.phone-frame { grid-area: 1 / 1; }
.screen {
  position: relative;
  grid-area: 1 / 1;
  width: 668px;
  height: 1449px;
  margin: 33px 0 0 25px;
  display: flex;
  flex-direction: column;
  border-radius: 30px;
  overflow: hidden;
  background: #fff;
}
.android-status { flex: none; height: 39px; padding: 0 13px 0 20px; display: flex; align-items: center; background: #3000ab; fill: #fff; color: #fff; }
.a-key {
  width: 18px;
  height: 19px;
  margin-left: 20px;
  border-radius: 2px;
  background: #fff;
  color: #3000ab;
  font-size: 15px;
  line-height: 18px;
  font-weight: 900;
  text-align: center;
}
.a-wifi { margin-left: auto; }
.a-signal { margin-left: 2px; }
.a-battery { margin-left: 14px; }
.android-status time { margin: 2px 0 0 12px; font-size: 23px; font-weight: 500; }
.appbar {
  flex: none;
  height: 91px;
  padding-left: 26px;
  line-height: 94px;
  font-size: 32.500px;
  font-weight: 500;
  letter-spacing: .48px;
  color: #fff;
  background: #550be1;
  box-shadow: 0 2px 7px rgba(0, 0, 0, .35);
  z-index: 1;
}
.calc { flex: 1; }
.field {
  position: relative;
  display: flex;
  flex-direction: column;
  justify-content: flex-end;
  margin: 0 6.500px;
  font-size: 65px;
  line-height: 76px;
  text-align: right;
  color: #9c9c9c;
}
.field-focus { height: 150px; padding-bottom: 6px; border-bottom: 3px solid #5fd6c6; }
.field-result { height: 160px; padding-bottom: 5px; border-bottom: 2px solid #868686; }
.caret { position: absolute; right: 0; top: 57px; width: 4px; height: 87px; background: #5fd6c6; }
.actions { display: grid; grid-template-columns: 1fr 1fr; gap: 6px; height: 143px; margin: 54px 6px 0; }
button {
  border: 0;
  border-radius: 6px;
  padding: 2px 0 0 2px;
  background: #555452;
  color: #fff;
  font: 700 22.700px Roboto, sans-serif;
  letter-spacing: 2px;
  box-shadow: 0 3px 4px rgba(0, 0, 0, .26), 0 0 3px rgba(0, 0, 0, .2);
}
.keys { display: grid; grid-template-columns: repeat(4, 1fr); grid-auto-rows: 110.500px; gap: 49.700px 24.500px; margin: 76px 37.500px 0; }
.navbar { flex: none; height: 78px; display: flex; justify-content: center; gap: 156px; align-items: center; background: #000; fill: none; stroke: #e6e6e6; stroke-width: 3.600px; }
.lens { position: absolute; left: 313px; top: 12px; z-index: 2; }

.zoom {
  position: absolute;
  right: 32px;
  bottom: 40px;
  width: 56px;
  height: 216px;
  padding: 16px 0 15px;
  display: flex;
  flex-direction: column;
  align-items: center;
  justify-content: space-between;
  border: 2px solid #3e3f40;
  border-radius: 8px;
  background: #2b2b2b;
}
.zoom span { margin-left: -2px; font-size: 21px; line-height: 24px; font-weight: 800; letter-spacing: -.8px; color: #b4b6b9; }

/* ---------- dock ---------- */
.dock-area { flex: 1; display: flex; padding: 4px 0 0 84px; }
.dock {
  width: 2772px;
  height: 124px;
  padding: 17px 0 0 17px;
  display: flex;
  gap: 26.650px;
  border: 2px solid rgba(255, 255, 255, .2);
  border-radius: 38px;
  background: linear-gradient(90deg, #181e27 0, #1a1f28 380px, #2c1624 480px, #3a1525 640px, #421a2e 820px, #491b20 1060px, #46191f 1200px, #3d1625 1380px, #3b1523 1500px, #3c1628 1700px, #451a33 1950px, #3f1729 2130px, #4a1a25 2300px, #5a1e1e 2500px, #6a2318 2772px);
  box-shadow: 0 0 0 1px rgba(0, 0, 0, .6);
}
.app { position: relative; flex: none; width: 76px; height: 76px; }
.app svg { width: 76px; height: 76px; overflow: visible; filter: drop-shadow(0 1px 2px rgba(0, 0, 0, .4)); }
.run::after { content: ""; position: absolute; left: 50%; top: 93px; width: 8px; height: 8px; margin-left: -4px; border-radius: 50%; background: rgba(255, 225, 235, .62); }
.petals { mix-blend-mode: multiply; }
.petals ellipse { mix-blend-mode: multiply; }
.badge {
  position: absolute;
  left: 53px;
  top: -9px;
  width: 36px;
  height: 36px;
  border-radius: 50%;
  background: #e44c3e;
  color: #fff;
  font-size: 21px;
  font-weight: 400;
  line-height: 36px;
  text-align: center;
}
.divider { width: 2px; height: 92px; margin: -3px 6px 0 9.500px; background: rgba(255, 200, 200, .35); }
.studio { width: 84px; margin-left: -3px; }
.studio svg { width: 84px; height: 84px; margin-top: -4px; }
.divider.second { margin: -3px 1px 0 7px; }
.box { width: 82px; margin-left: 2px; }
.box svg { width: 82px; height: 84px; margin-top: -3px; }
.trash { width: 66px; margin-left: 3px; }
.trash svg { width: 66px; height: 88px; margin-top: -7px; }
.cal-month { font: 600 15.500px Inter, sans-serif; text-anchor: middle; fill: #fbeeee; }
.cal-day { font: 300 47px Inter, sans-serif; text-anchor: middle; fill: #2a2a2a; }
.tv-text { font: 500 35px Inter, sans-serif; letter-spacing: -1px; fill: #fff; }
.teams-text { font: 700 23px "Open Sans", sans-serif; text-anchor: middle; fill: #fff; }
```
